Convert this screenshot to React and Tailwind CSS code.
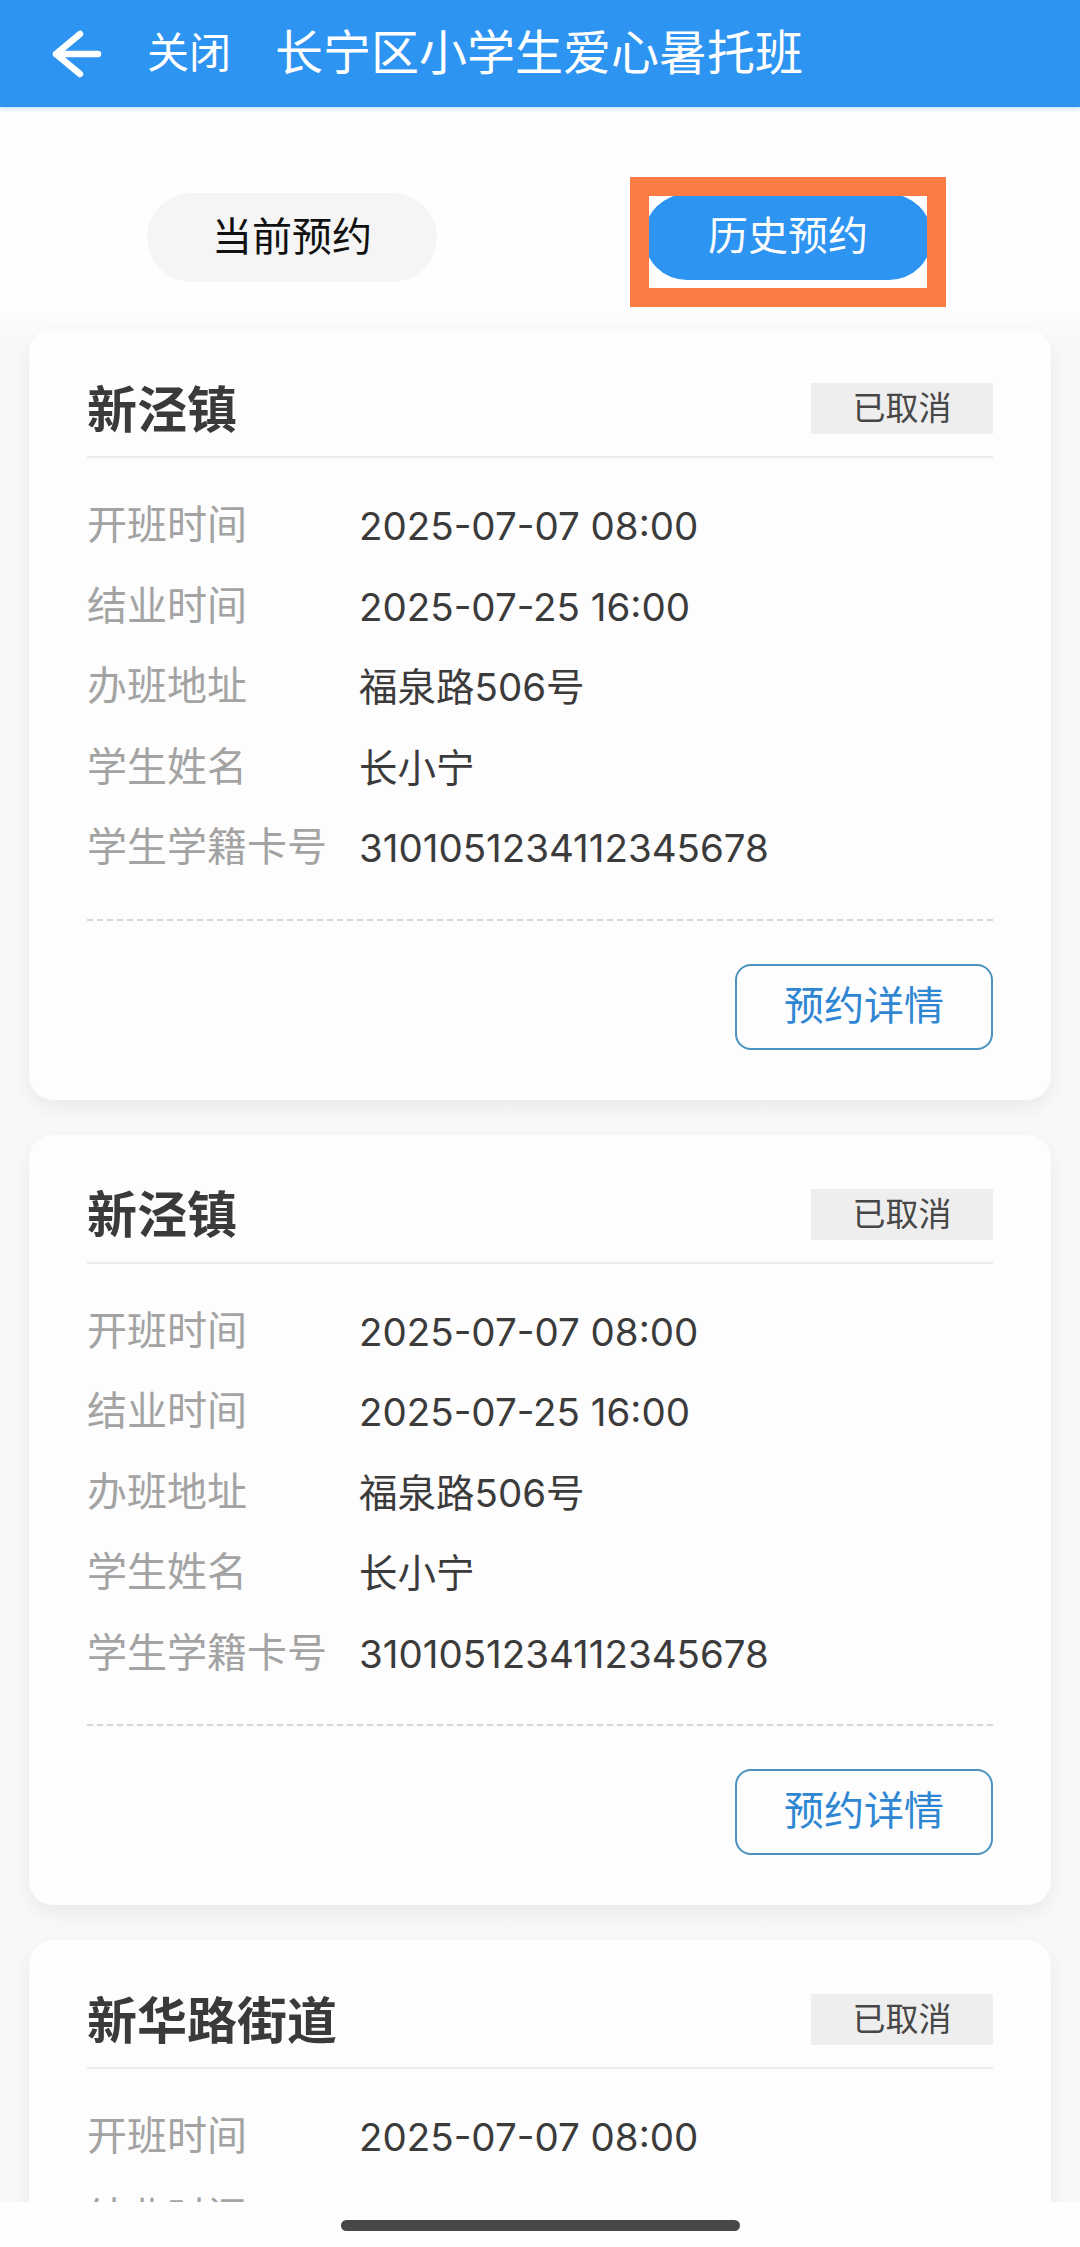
const rows = [
  ["开班时间", "2025-07-07 08:00"],
  ["结业时间", "2025-07-25 16:00"],
  ["办班地址", "福泉路506号"],
  ["学生姓名", "长小宁"],
  ["学生学籍卡号", "3101051234112345678"],
];

const bookings = [
  { id: 1, town: "新泾镇", status: "已取消" },
  { id: 2, town: "新泾镇", status: "已取消" },
  { id: 3, town: "新华路街道", status: "已取消" },
];

function BookingCard({ town, status }) {
  return (
    <div className="mx-[29px] shrink-0 rounded-[24px] bg-[#fdfdfd] px-[58px] pt-[54px] pb-[50px] shadow-[0_8px_18px_rgba(0,0,0,0.06)]">
      <div className="flex h-[51px] items-center justify-between">
        <h2 className="pt-[4px] text-[50px] font-bold leading-none text-[#3a3a3a]">{town}</h2>
        <span className="flex h-[51px] w-[182px] items-center justify-center bg-[#eeeeee] text-[33px] leading-none text-[#474747]">
          {status}
        </span>
      </div>
      <div className="mt-[22px] border-b-2 border-[#ececec]" />

      <div className="mt-[28px] flex flex-col">
        {rows.map(([label, value]) => (
          <div key={label} className="flex h-[80.5px] items-center text-[40px] leading-none">
            <span className="w-[272px] shrink-0 text-[#a3a3a3]">{label}</span>
            <span className="font-['Inter','Noto_Sans_CJK_SC',sans-serif] text-[38.5px] text-[#3b3b3b]">
              {value}
            </span>
          </div>
        ))}
      </div>

      <div className="mt-[30px] border-t-2 border-dashed border-[#d6d6d6]" />

      <div className="mt-[43px] flex justify-end">
        <button className="flex h-[86px] w-[258px] items-center justify-center rounded-[16px] border-2 border-[#4b92bf] text-[40px] leading-none text-[#2f86d3]">
          预约详情
        </button>
      </div>
    </div>
  );
}

export default function App() {
  return (
    <div className="flex h-[2247px] w-[1080px] flex-col overflow-hidden bg-[#fefefe] font-['Roboto','Noto_Sans_CJK_SC',sans-serif]">
      {/* title bar */}
      <header className="flex h-[107px] shrink-0 items-center bg-[#2d95f1] pl-[52px] text-white shadow-[0_2px_4px_rgba(45,149,241,0.25)]">
        <svg width="50" height="48" viewBox="0 0 50 48" fill="none">
          <path
            d="M28 4 L4 24 L28 44 M4 24 H46"
            stroke="white"
            strokeWidth="6.5"
            strokeLinecap="round"
            strokeLinejoin="round"
          />
        </svg>
        <span className="ml-[45px] text-[42px] leading-none">关闭</span>
        <span className="ml-[44px] text-[48px] leading-none">长宁区小学生爱心暑托班</span>
      </header>

      {/* tabs */}
      <div className="grid h-[200px] shrink-0 grid-cols-2 items-start px-[44px]">
        <div className="flex justify-center">
          <button className="mt-[86px] flex h-[89px] w-[290px] items-center justify-center rounded-full bg-[#f5f5f5] text-[40px] leading-none text-[#111111]">
            当前预约
          </button>
        </div>
        <div className="flex justify-center">
          <div className="mt-[70px] h-[130px] w-[316px] border-[19px] border-[#fb7b45] bg-white">
            <div className="flex h-full w-full justify-center overflow-hidden">
              <button className="-mt-[2px] flex h-[86px] w-[288px] shrink-0 items-center justify-center rounded-full bg-[#2d95f1] text-[40px] leading-none text-white">
                历史预约
              </button>
            </div>
          </div>
        </div>
      </div>

      {/* booking list */}
      <div className="flex flex-1 flex-col gap-[35px] overflow-hidden bg-gradient-to-b from-[#fdfdfd] to-[#f8f8f8] to-[40px] pt-[22px]">
        {bookings.map((b) => (
          <BookingCard key={b.id} town={b.town} status={b.status} />
        ))}
      </div>

      {/* home indicator */}
      <div className="flex h-[45px] shrink-0 justify-center bg-[#fefefe] pt-[18px]">
        <div className="h-[11px] w-[399px] rounded-full bg-[#474747]" />
      </div>
    </div>
  );
}
